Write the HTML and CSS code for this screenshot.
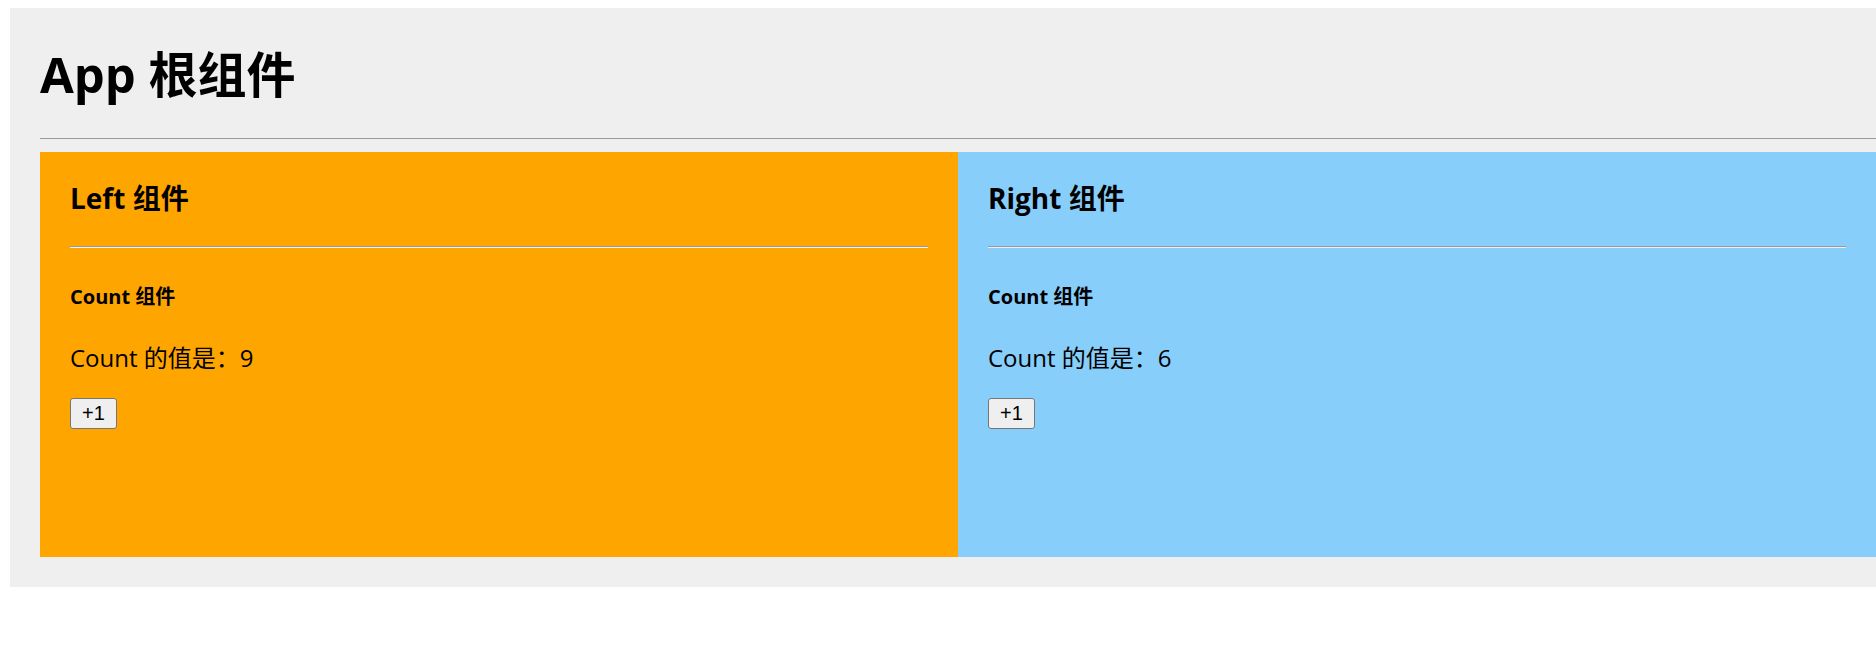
FILE: index.html
```html
<!DOCTYPE html>
<html lang="zh-CN">
<head>
<meta charset="utf-8">
<title>App 根组件</title>
<link rel="stylesheet" href="styles.css">
</head>
<body>
<div class="app-container">
  <h1 class="app-title">App 根组件</h1>
  <hr class="divider">
  <div class="box">
    <div class="panel panel-left">
      <h3 class="panel-title">Left 组件</h3>
      <hr class="divider">
      <div class="counter">
        <h4 class="counter-title">Count 组件</h4>
        <p class="counter-value">Count 的值是：9</p>
        <button class="counter-btn" type="button">+1</button>
      </div>
    </div>
    <div class="panel panel-right">
      <h3 class="panel-title">Right 组件</h3>
      <hr class="divider">
      <div class="counter">
        <h4 class="counter-title">Count 组件</h4>
        <p class="counter-value">Count 的值是：6</p>
        <button class="counter-btn" type="button">+1</button>
      </div>
    </div>
  </div>
</div>
</body>
</html>
```

FILE: styles.css
```css
html, body {
  overflow: hidden;
}

body {
  margin: 8px 0 0 10px;
  font-family: "Open Sans", "Noto Sans CJK SC", sans-serif;
  font-size: 24px;
  color: #000;
  background: #fff;
}

.app-container {
  width: 1836px;
  padding: 1.5px 30px 30px;
  background-color: #efefef;
}

.app-title {
  margin: 32px 0;
  font-size: 49px;
  line-height: 64.5px;
  font-weight: 700;
}

.divider {
  margin: 12px 0;
  height: 0;
  border: 0;
  border-top: 1px solid #9a9a9a;
  border-bottom: 1px solid #eeeeee;
}

.box {
  display: flex;
}

.panel {
  flex: 1;
  min-height: 375px;
  padding: 0 30px 30px;
}

.panel-left {
  background-color: #ffa500;
}

.panel-right {
  background-color: #87cefa;
}

.panel-title {
  margin: 21px 0 29px;
  padding-top: 7px;
  font-size: 28px;
  line-height: 37px;
  font-weight: 700;
}

.counter-title {
  margin: 32px 0 29.5px;
  padding-top: 0.5px;
  font-size: 20px;
  line-height: 32px;
  font-weight: 700;
}

.counter-value {
  margin: 25px 0 20px;
  font-size: 24px;
  line-height: 32px;
}

.counter-btn {
  box-sizing: border-box;
  height: 31px;
  padding: 0 11px;
  font-family: "Liberation Sans", Arial, sans-serif;
  font-size: 20px;
  line-height: 1;
  color: #000;
  background-color: #efefef;
  border: 1px solid #767676;
  border-radius: 3px;
}
```
